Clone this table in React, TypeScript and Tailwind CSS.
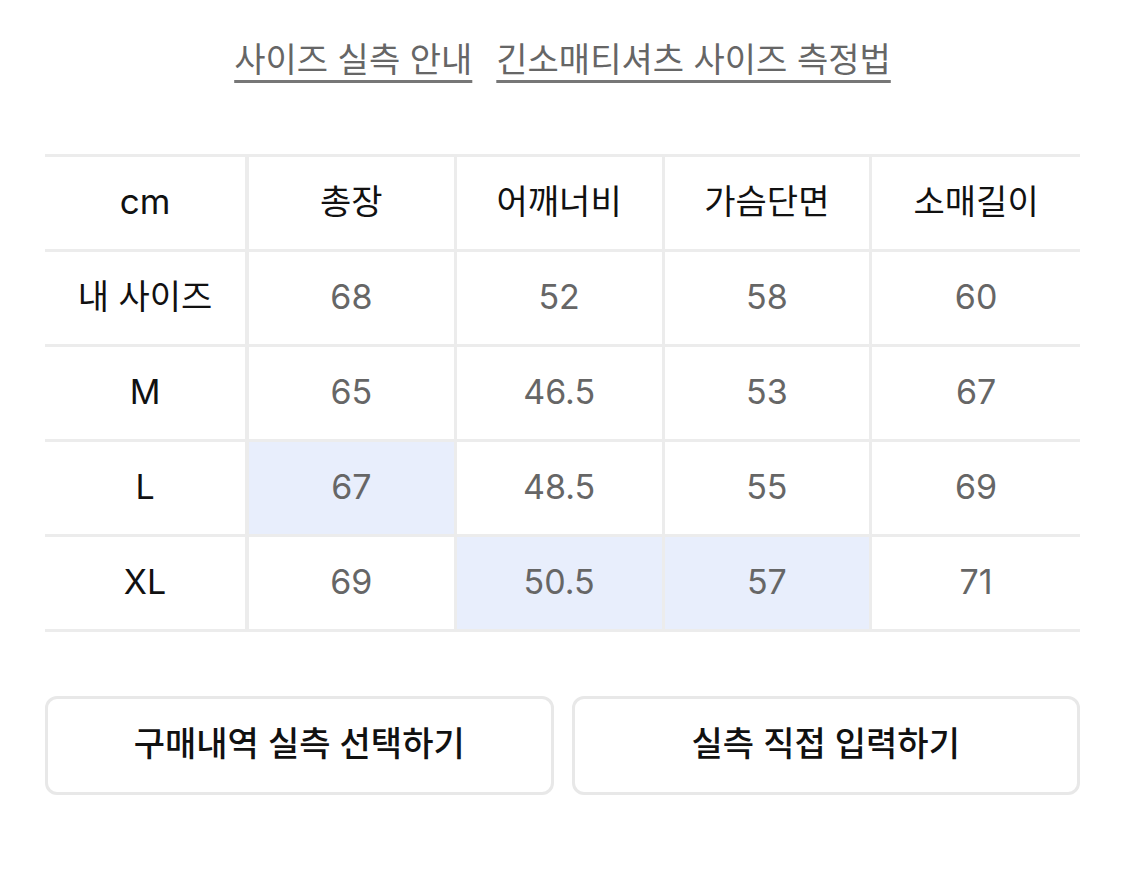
const headers = ["총장", "어깨너비", "가슴단면", "소매길이"];

const rows: { label: string; values: string[]; hl: number[] }[] = [
  { label: "내 사이즈", values: ["68", "52", "58", "60"], hl: [] },
  { label: "M", values: ["65", "46.5", "53", "67"], hl: [] },
  { label: "L", values: ["67", "48.5", "55", "69"], hl: [0] },
  { label: "XL", values: ["69", "50.5", "57", "71"], hl: [1, 2] },
];

const font = { fontFamily: 'Inter, "Noto Sans CJK KR", sans-serif' };

export default function App() {
  return (
    <div className="w-[1125px] min-h-[870px] bg-white px-[45px]" style={font}>
      <div className="flex justify-center gap-[24px] pt-[40px] text-[34px] leading-[40px] text-[#666]">
        <a className="underline decoration-[3px] underline-offset-[8px] decoration-[#777]">사이즈 실측 안내</a>
        <a className="underline decoration-[3px] underline-offset-[8px] decoration-[#777]">긴소매티셔츠 사이즈 측정법</a>
      </div>

      <div className="mt-[74px] border-t-[3px] border-[#ececec]">
        <div className="grid grid-cols-[204px_repeat(4,1fr)]">
          <div className="flex h-[95px] items-center justify-center border-b-[3px] border-r-[4px] border-[#ececec] pb-[4px] text-[35px] text-[#111]">
            cm
          </div>
          {headers.map((h, i) => (
            <div
              key={h}
              className={`flex h-[95px] items-center justify-center border-b-[3px] border-[#ececec] pb-[4px] text-[34px] text-[#111] ${
                i < 3 ? "border-r-[3px]" : ""
              }`}
            >
              {h}
            </div>
          ))}
          {rows.map((r) => (
            <Row key={r.label} row={r} />
          ))}
        </div>
      </div>

      <div className="mt-[64px] grid grid-cols-2 gap-[18px]">
        <button className="h-[99px] rounded-[12px] border-[3px] border-[#e8e8e8] bg-white pb-[4px] text-[34px] font-medium text-[#111]">
          구매내역 실측 선택하기
        </button>
        <button className="h-[99px] rounded-[12px] border-[3px] border-[#e8e8e8] bg-white pb-[4px] text-[34px] font-medium text-[#111]">
          실측 직접 입력하기
        </button>
      </div>
    </div>
  );
}

function Row({ row }: { row: { label: string; values: string[]; hl: number[] } }) {
  return (
    <>
      <div className="flex h-[95px] items-center justify-center border-b-[3px] border-r-[4px] border-[#ececec] pb-[4px] text-[34px] text-[#111]">
        {row.label}
      </div>
      {row.values.map((v, i) => (
        <div
          key={i}
          className={`flex h-[95px] items-center justify-center border-b-[3px] border-[#ececec] pb-[4px] text-[34px] text-[#666] ${
            i < 3 ? "border-r-[3px]" : ""
          } ${row.hl.includes(i) ? "bg-[#e8eefc]" : "bg-white"}`}
        >
          {v}
        </div>
      ))}
    </>
  );
}
